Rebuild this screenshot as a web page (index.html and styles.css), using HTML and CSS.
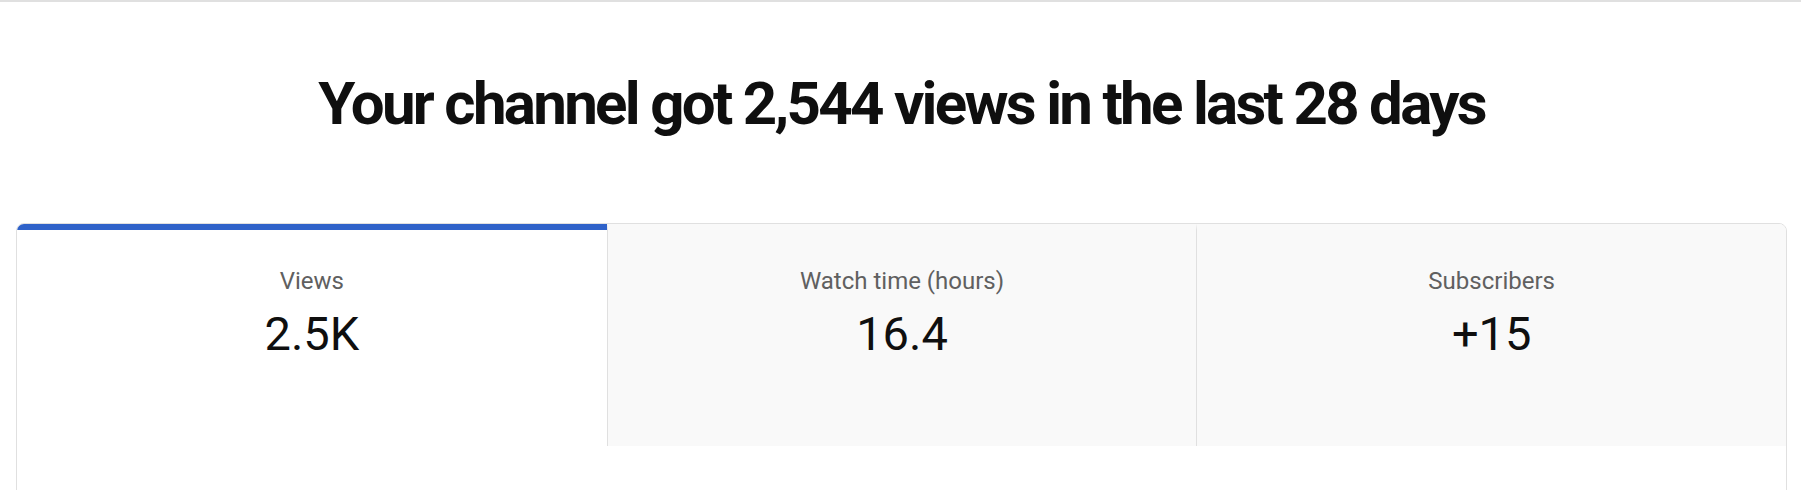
FILE: index.html
```html
<!DOCTYPE html>
<html lang="en">

<head>
    <meta charset="UTF-8">
    <meta name="viewport" content="width=device-width, initial-scale=1.0">
    <title>Channel analytics</title>
    <link rel="stylesheet" href="styles.css">
</head>

<body>
    <div class="top-line"></div>
    <h1 class="summary-title">Your channel got 2,544 views in the last 28 days</h1>

    <div class="stats-card">
        <div class="tabs">
            <div class="tab active">
                <div class="tab-label">Views</div>
                <div class="tab-value">2.5K</div>
            </div>
            <div class="tab">
                <div class="tab-label">Watch time (hours)</div>
                <div class="tab-value">16.4</div>
            </div>
            <div class="tab">
                <div class="tab-label">Subscribers</div>
                <div class="tab-value">+15</div>
            </div>
        </div>
        <!-- chart area under the tabs -->
        <div class="chart-area"></div>
    </div>
</body>

</html>
```

FILE: styles.css
```css
:root {
    --text-color: #0f0f0f;
    --label-color: #606060;
    --border-color: #e0e0e0;
    --tab-background: #f9f9f9;
    --accent-blue: #2f62c9;
}

html,
body {
    margin: 0;
    background: #ffffff;
}

body {
    font-family: Roboto, "Liberation Sans", Arial, sans-serif;
    color: var(--text-color);
    padding: 0 14px 0 16px;
    overflow: hidden;
}

.top-line {
    height: 2px;
    margin: 0 -14px 0 -16px;
    background: var(--border-color);
}

.summary-title {
    margin: 66px 0 0;
    font-size: 60px;
    line-height: 72px;
    font-weight: 700;
    text-align: center;
    letter-spacing: -2.7px;
}

.stats-card {
    margin-top: 83px;
    border: 1px solid var(--border-color);
    border-radius: 8px;
    overflow: hidden;
}

.tabs {
    display: grid;
    grid-template-columns: repeat(3, 1fr);
}

.tab {
    height: 222px;
    box-sizing: border-box;
    padding-top: 37px;
    border-top: 6px solid transparent;
    border-left: 1px solid var(--border-color);
    background: var(--tab-background);
    text-align: center;
}

.tab:first-child {
    border-left: none;
}

.tab.active {
    background: #ffffff;
    border-top-color: var(--accent-blue);
}

.tab-label {
    font-size: 24px;
    line-height: 28px;
    color: var(--label-color);
}

.tab-value {
    margin-top: 11px;
    font-size: 47px;
    line-height: 56px;
}

.chart-area {
    height: 300px;
    background: #ffffff;
}
```
